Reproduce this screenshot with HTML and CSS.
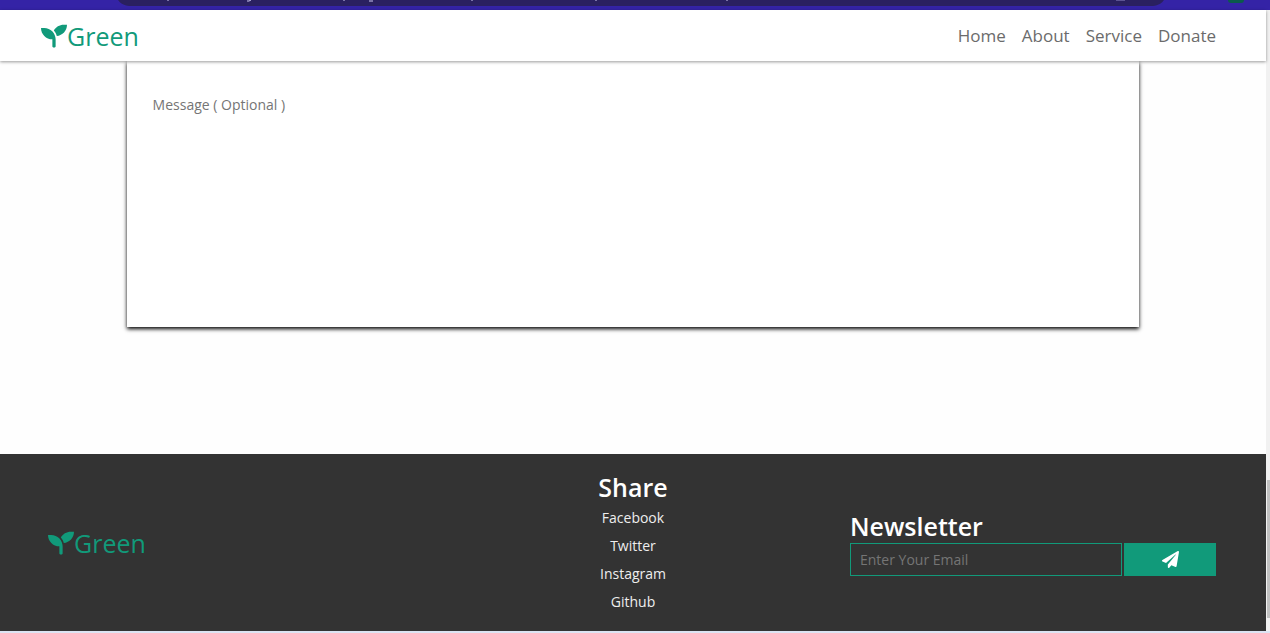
FILE: index.html
```html
<!DOCTYPE html>
<html lang="en">
<head>
<meta charset="utf-8">
<meta name="viewport" content="width=device-width, initial-scale=1">
<title>Green</title>
<link rel="stylesheet" href="styles.css">
</head>
<body>
<div class="browser-bar">
  <svg class="browser-pill" viewBox="0 0 1046 10" preserveAspectRatio="none" aria-hidden="true">
    <path fill="#2a2060" d="M0 0C3 4 7 6 14 6H1032C1039 6 1043 4 1046 0z"/>
    <path stroke="#c9c3ee" fill="none" d="M50 0v1M129 1h2l2-1M226 0v1M251 1h4M354 0v1M478 0v1M609 0v1"/>
    <path stroke="#8e86c4" fill="none" d="M998 0h9"/>
  </svg>
  <span class="browser-avatar"></span>
</div>
<div class="viewport">
  <div class="page">
    <header class="site-header">
      <a class="logo" href="#">
        <svg class="logo-icon" viewBox="0 0 512 512" aria-hidden="true"><path d="M64 96H0c0 123.700 100.300 224 224 224v144c0 8.800 7.200 16 16 16h32c8.800 0 16-7.200 16-16V320C288 196.300 187.700 96 64 96zm384-64c-84.200 0-157.400 46.500-195.700 115.200 27.700 30.200 48.200 66.900 59 107.600C424 243.100 512 147.900 512 32h-64z"/></svg>
        <span>Green</span>
      </a>
      <nav class="site-nav">
        <a href="#">Home</a>
        <a href="#">About</a>
        <a href="#">Service</a>
        <a href="#">Donate</a>
      </nav>
    </header>
    <main class="content">
      <form class="donate-form">
        <textarea class="message" aria-label="Message (optional)" placeholder="Message ( Optional )"></textarea>
      </form>
    </main>
    <footer class="site-footer">
      <a class="logo footer-logo" href="#">
        <svg class="logo-icon" viewBox="0 0 512 512" aria-hidden="true"><path d="M64 96H0c0 123.700 100.300 224 224 224v144c0 8.800 7.200 16 16 16h32c8.800 0 16-7.200 16-16V320C288 196.300 187.700 96 64 96zm384-64c-84.200 0-157.400 46.500-195.700 115.200 27.700 30.200 48.200 66.900 59 107.600C424 243.100 512 147.900 512 32h-64z"/></svg>
        <span>Green</span>
      </a>
      <section class="share">
        <h2>Share</h2>
        <ul>
          <li><a href="#">Facebook</a></li>
          <li><a href="#">Twitter</a></li>
          <li><a href="#">Instagram</a></li>
          <li><a href="#">Github</a></li>
        </ul>
      </section>
      <section class="newsletter">
        <h2>Newsletter</h2>
        <form class="newsletter-form">
          <input type="email" aria-label="Email" placeholder="Enter Your Email">
          <button type="button" aria-label="Subscribe">
            <svg viewBox="0 0 512 512" aria-hidden="true"><path d="M476 3.200L12.500 270.600c-18.100 10.400-15.800 35.600 2.200 43.200L121 358.400l287.300-253.200c5.500-4.900 13.300 2.600 8.600 8.300L176 407v80.500c0 23.600 28.500 32.900 42.500 15.800L282 426l124.600 52.200c14.200 6 30.400-2.900 33-18.200l72-432C515 7.800 493.300-6.800 476 3.200z"/></svg>
          </button>
        </form>
      </section>
    </footer>
  </div>
  <div class="scrollbar"><div class="scroll-thumb"></div></div>
</div>
<div class="taskbar-edge"></div>
</body>
</html>
```
FILE: styles.css
```css
* { box-sizing: border-box; }

body {
  margin: 0;
  min-height: 100vh;
  display: flex;
  flex-direction: column;
  font-family: "Open Sans", "Noto Sans", sans-serif;
  background: #fefefe;
}

a { text-decoration: none; }
h2 { margin: 0; font-size: 25px; font-weight: 600; line-height: 34px; color: #fff; }

.browser-bar {
  display: flex;
  align-items: flex-start;
  height: 10px;
  padding: 0 26px 0 118px;
  overflow: hidden;
  background: #3423a6;
}
.browser-pill { flex: 1; height: 10px; }
.browser-avatar {
  width: 16px;
  height: 3px;
  margin-left: 64px;
  border-radius: 0 0 8px 8px;
  background: #0b5a4c;
}

.viewport { flex: 1; display: flex; }
.page { flex: 1; display: flex; flex-direction: column; }

.site-header {
  display: flex;
  justify-content: space-between;
  align-items: center;
  height: 51px;
  padding: 0 50px 0 41px;
  background: #fff;
  box-shadow: 0 1px 3px rgba(0, 0, 0, 0.4);
  z-index: 1;
}
.logo {
  display: flex;
  align-items: center;
  font-size: 25px;
  line-height: 34px;
  color: #119a7a;
}
.logo-icon { width: 26px; height: 26px; fill: currentColor; }

.site-nav { display: flex; gap: 16px; }
.site-nav a { font-size: 17px; line-height: 24px; color: #6b6b6b; }

.content { flex: 1; padding: 0 10% 127px; }
.donate-form {
  display: flex;
  height: 266px;
  padding: 26px;
  background: #fff;
  box-shadow: 0 2px 4px #000;
}
.message {
  flex: 1;
  padding: 8px 0;
  border: 0;
  outline: 0;
  resize: none;
  background: transparent;
  font: 14px/20px "Open Sans", sans-serif;
  color: #333;
}
.message::placeholder { color: #757575; }

.site-footer {
  display: grid;
  grid-template-columns: 1fr auto 1fr;
  align-items: center;
  padding: 16px 48px 15px;
  background: #333;
}
.share { text-align: center; }
.share ul { margin: 0; padding: 0; list-style: none; }
.share li { line-height: 28px; font-size: 14px; }
.share a { color: #eee; }

.newsletter { width: 366px; margin-right: 2px; padding-bottom: 2px; justify-self: end; }
.newsletter-form { display: flex; gap: 2px; }
.newsletter input {
  flex: 1;
  min-width: 0;
  height: 33px;
  padding: 0 9px;
  border: 1px solid #119a7a;
  border-radius: 0;
  outline: 0;
  background: transparent;
  font: 14px/20px "Open Sans", sans-serif;
  color: #fff;
}
.newsletter input::placeholder { color: #757575; }
.newsletter button {
  display: flex;
  align-items: center;
  justify-content: center;
  width: 92px;
  height: 33px;
  padding: 0;
  border: 0;
  background: #119a7a;
}
.newsletter button svg { width: 17px; height: 17px; fill: #fff; }

.scrollbar {
  display: flex;
  flex-direction: column;
  justify-content: flex-end;
  width: 4px;
  padding: 0 0 13px 1px;
  background: #f1f1f1;
}
.scroll-thumb { height: 138px; background: #c1c1c1; }
.taskbar-edge { height: 2px; background: #dce3f2; }
```
